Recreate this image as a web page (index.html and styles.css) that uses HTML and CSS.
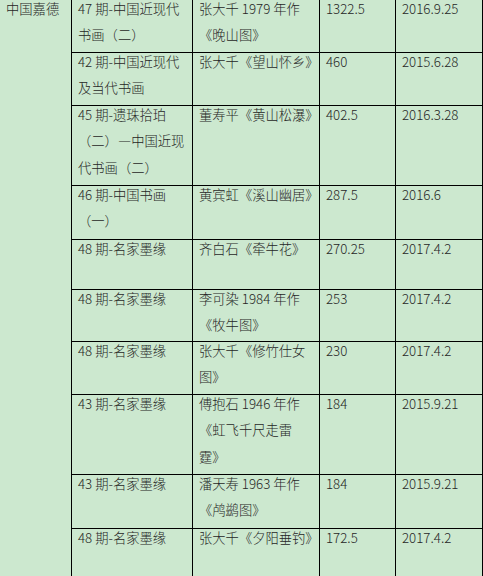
FILE: index.html
```html
<!DOCTYPE html>
<html lang="zh-CN">
<head>
<meta charset="utf-8">
<title>拍卖记录</title>
<link rel="stylesheet" href="styles.css">
</head>
<body>
<table class="grid">
  <colgroup>
    <col class="c1"><col class="c2"><col class="c3"><col class="c4"><col class="c5">
  </colgroup>
  <tbody>
    <tr class="r53">
      <td rowspan="10"><div class="t">中国嘉德</div></td>
      <td><div class="t">47 期-中国近现代<br>书画（二）</div></td>
      <td><div class="t">张大千 1979 年作<br>《晚山图》</div></td>
      <td><div class="t">1322.5</div></td>
      <td><div class="t">2016.9.25</div></td>
    </tr>
    <tr class="r53">
      <td><div class="t">42 期-中国近现代<br>及当代书画</div></td>
      <td><div class="t">张大千《望山怀乡》</div></td>
      <td><div class="t">460</div></td>
      <td><div class="t">2015.6.28</div></td>
    </tr>
    <tr class="r80">
      <td><div class="t">45 期-遗珠拾珀<br>（二）—中国近现<br>代书画（二）</div></td>
      <td><div class="t">董寿平《黄山松瀑》</div></td>
      <td><div class="t">402.5</div></td>
      <td><div class="t">2016.3.28</div></td>
    </tr>
    <tr class="r54">
      <td><div class="t">46 期-中国书画<br>（一）</div></td>
      <td><div class="t">黄宾虹《溪山幽居》</div></td>
      <td><div class="t">287.5</div></td>
      <td><div class="t">2016.6</div></td>
    </tr>
    <tr class="r50">
      <td><div class="t">48 期-名家墨缘</div></td>
      <td><div class="t">齐白石《牵牛花》</div></td>
      <td><div class="t">270.25</div></td>
      <td><div class="t">2017.4.2</div></td>
    </tr>
    <tr class="r52">
      <td><div class="t">48 期-名家墨缘</div></td>
      <td><div class="t">李可染 1984 年作<br>《牧牛图》</div></td>
      <td><div class="t">253</div></td>
      <td><div class="t">2017.4.2</div></td>
    </tr>
    <tr class="r53">
      <td><div class="t">48 期-名家墨缘</div></td>
      <td><div class="t">张大千《修竹仕女<br>图》</div></td>
      <td><div class="t">230</div></td>
      <td><div class="t">2017.4.2</div></td>
    </tr>
    <tr class="r80">
      <td><div class="t">43 期-名家墨缘</div></td>
      <td><div class="t">傅抱石 1946 年作<br>《虹飞千尺走雷<br>霆》</div></td>
      <td><div class="t">184</div></td>
      <td><div class="t">2015.9.21</div></td>
    </tr>
    <tr class="r54">
      <td><div class="t">43 期-名家墨缘</div></td>
      <td><div class="t">潘天寿 1963 年作<br>《鸬鹚图》</div></td>
      <td><div class="t">184</div></td>
      <td><div class="t">2015.9.21</div></td>
    </tr>
    <tr class="r54">
      <td><div class="t">48 期-名家墨缘</div></td>
      <td><div class="t">张大千《夕阳垂钓》</div></td>
      <td><div class="t">172.5</div></td>
      <td><div class="t">2017.4.2</div></td>
    </tr>
  </tbody>
</table>
</body>
</html>
```
FILE: styles.css
```css
html, body {
  margin: 0;
  padding: 0;
  background: #cce8cf;
}
body {
  font-family: "Noto Sans CJK SC", "Noto Sans", sans-serif;
  font-size: 13.3px;
  font-weight: 300;
  color: #262626;
  overflow: hidden;
}
.grid {
  border-collapse: collapse;
  table-layout: fixed;
  width: 483px;
  margin: -1px 0 0 -1px;
}
.c1 { width: 72px; }
.c2 { width: 121px; }
.c3 { width: 127px; }
.c4 { width: 76px; }
.c5 { width: 87px; }
.grid td {
  border: 1px solid #000;
  padding: 0 2px 0 6px;
  vertical-align: top;
  line-height: 26.5px;
  white-space: nowrap;
  overflow: visible;
}
.t { margin-top: -4.5px; }
.num { letter-spacing: 0.3px; }
.r50 { height: 50px; }
.r52 { height: 52px; }
.r53 { height: 53px; }
.r54 { height: 54px; }
.r80 { height: 80px; }
```
